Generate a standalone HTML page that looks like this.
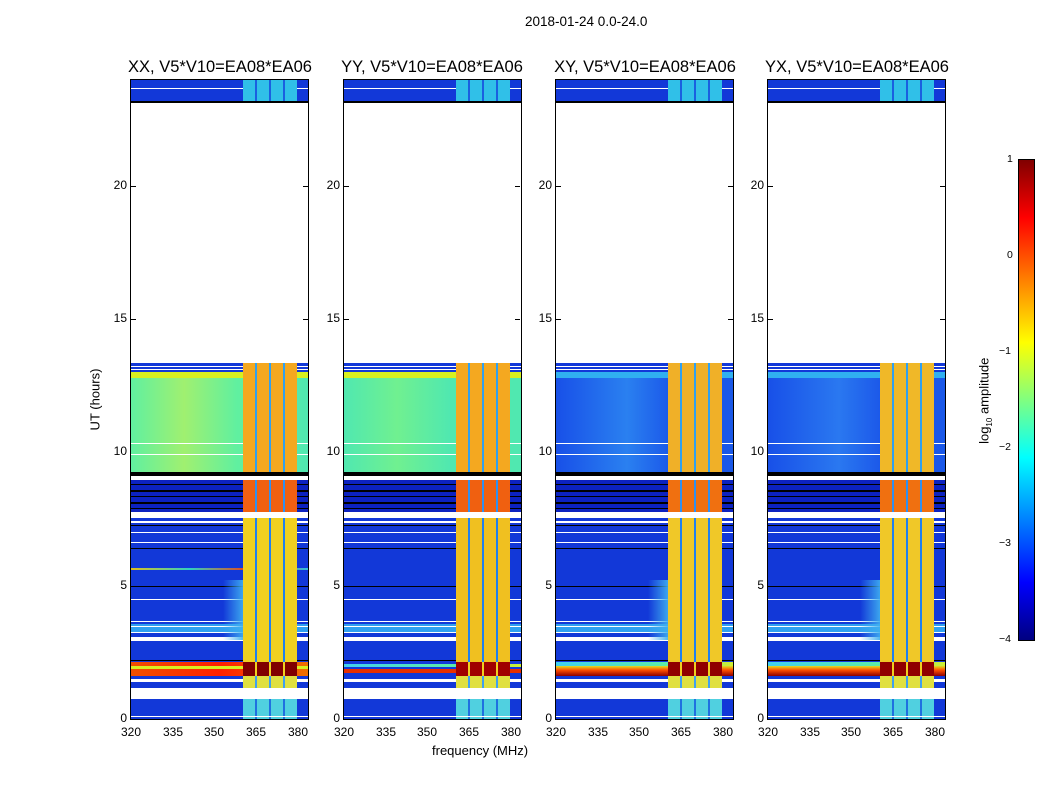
<!DOCTYPE html>
<html><head><meta charset="utf-8"><style>
body{margin:0;width:1050px;height:800px;background:#fff;position:relative;font-family:"Liberation Sans",sans-serif;overflow:hidden}
.t{position:absolute;color:#000;white-space:nowrap}
.p{position:absolute;top:80px;width:177px;height:639px;background:#fff;overflow:hidden;outline:1px solid #000}
.p div{position:absolute;left:0;width:100%}
.b{background:#1238d8}
.bd{background:#0c22c0}
.w{background:#fff}
.k{background:#000}
.col{left:112px!important;width:54px!important}
.haze{left:92px!important;width:22px!important;background:linear-gradient(90deg,rgba(40,120,240,0),#40b0f0)}
.tk{position:absolute;background:#000}
.pt{position:absolute;top:58px;font-size:16.5px;width:220px;text-align:center}
.yl{position:absolute;font-size:12px;text-align:right;width:30px}
.xl{position:absolute;top:725px;font-size:12px;width:30px;text-align:center}
</style></head><body>
<div class="t" style="left:525px;top:14px;font-size:13.5px">2018-01-24 0.0-24.0</div>
<div class="t" style="left:432px;top:743px;font-size:13px">frequency (MHz)</div>
<div class="t" style="left:64px;top:392px;font-size:13px;transform:rotate(-90deg)">UT (hours)</div>
<div class="t" style="left:942px;top:392px;font-size:13px;transform:rotate(-90deg)">log<sub style="font-size:8px">10</sub> amplitude</div>

<div class="pt" style="left:110px">XX, V5*V10=EA08*EA06</div>
<div class="pt" style="left:322px">YY, V5*V10=EA08*EA06</div>
<div class="pt" style="left:535px">XY, V5*V10=EA08*EA06</div>
<div class="pt" style="left:747px">YX, V5*V10=EA08*EA06</div>

<div class="p" style="left:131px">
<div class="b" style="top:0;height:21px"></div><div class="w" style="top:8px;height:1px"></div>
<div class="col" style="top:0;height:21px;background:repeating-linear-gradient(90deg,#30c0e8 0 12px,#1a60e0 12px 14px)"></div>
<div class="k" style="top:21px;height:2px"></div>
<div class="b" style="top:283px;height:9px"></div><div class="w" style="top:286px;height:1px"></div><div class="w" style="top:289px;height:1px"></div>
<div style="top:292px;height:6px;background:#d8f020"></div>
<div style="top:298px;height:94px;background:linear-gradient(90deg,#60f0a0,#a0f070 30%,#60f0a0 60%,#50e8b0)"></div>
<div class="w" style="top:363px;height:1px"></div><div class="w" style="top:374px;height:1px"></div>
<div class="k" style="top:392px;height:4px"></div>
<div class="bd" style="top:400px;height:32px"></div>
<div class="k" style="top:404px;height:1px"></div><div class="k" style="top:410px;height:2px"></div><div class="k" style="top:416px;height:1px"></div><div class="k" style="top:422px;height:2px"></div><div class="k" style="top:428px;height:1px"></div>
<div class="b" style="top:438px;height:144px"></div>
<div class="w" style="top:441px;height:2px"></div><div class="k" style="top:445px;height:1px"></div><div class="w" style="top:452px;height:1px"></div><div class="w" style="top:462px;height:1px"></div><div class="k" style="top:468px;height:1px"></div>
<div style="top:488px;height:2px;background:linear-gradient(90deg,#e0c020,#30d0c0,#f04010,#30c0e0)"></div>
<div class="k" style="top:506px;height:1px"></div><div class="w" style="top:519px;height:1px"></div>
<div class="w" style="top:541px;height:1px"></div><div style="top:544px;height:8px;background:#30a0f0"></div>
<div class="w" style="top:546px;height:1px"></div><div class="w" style="top:552px;height:1px"></div><div class="w" style="top:557px;height:4px"></div>
<div class="haze" style="top:500px;height:60px"></div>
<div class="k" style="top:580px;height:1px"></div>
<div style="top:582px;height:14px;background:linear-gradient(90deg,#f05000,#ff2000 50%,#f07000)"></div>
<div style="top:586px;height:3px;background:#d8f020"></div>
<div class="b" style="top:596px;height:12px"></div><div class="w" style="top:599px;height:3px"></div>
<div class="w" style="top:608px;height:11px"></div>
<div class="b" style="top:619px;height:20px"></div>
<div class="col" style="top:283px;height:109px;background:repeating-linear-gradient(90deg,#f4a820 0 12px,#30a0f0 12px 14px)"></div>
<div class="col" style="top:400px;height:32px;background:repeating-linear-gradient(90deg,#f06010 0 12px,#3090f0 12px 14px)"></div>
<div class="col" style="top:438px;height:144px;background:repeating-linear-gradient(90deg,#f0d020 0 12px,#2080f0 12px 14px)"></div>
<div class="col" style="top:582px;height:14px;background:repeating-linear-gradient(90deg,#800000 0 12px,#f0d020 12px 14px)"></div>
<div class="col" style="top:596px;height:12px;background:repeating-linear-gradient(90deg,#e0e040 0 12px,#40a0f0 12px 14px)"></div>
<div class="col" style="top:619px;height:20px;background:repeating-linear-gradient(90deg,#50d0e0 0 12px,#2070e0 12px 14px)"></div>
<div class="w" style="top:636px;height:1px"></div>
</div>

<div class="p" style="left:344px">
<div class="b" style="top:0;height:21px"></div><div class="w" style="top:8px;height:1px"></div>
<div class="col" style="top:0;height:21px;background:repeating-linear-gradient(90deg,#30c0e8 0 12px,#1a60e0 12px 14px)"></div>
<div class="k" style="top:21px;height:2px"></div>
<div class="b" style="top:283px;height:9px"></div><div class="w" style="top:286px;height:1px"></div><div class="w" style="top:289px;height:1px"></div>
<div style="top:292px;height:6px;background:#d8f020"></div>
<div style="top:298px;height:94px;background:linear-gradient(90deg,#50e8b0,#70f090 30%,#50e8b0 60%,#50e8b0)"></div>
<div class="w" style="top:363px;height:1px"></div><div class="w" style="top:374px;height:1px"></div>
<div class="k" style="top:392px;height:4px"></div>
<div class="bd" style="top:400px;height:32px"></div>
<div class="k" style="top:404px;height:1px"></div><div class="k" style="top:410px;height:2px"></div><div class="k" style="top:416px;height:1px"></div><div class="k" style="top:422px;height:2px"></div><div class="k" style="top:428px;height:1px"></div>
<div class="b" style="top:438px;height:144px"></div>
<div class="w" style="top:441px;height:2px"></div><div class="k" style="top:445px;height:1px"></div><div class="w" style="top:452px;height:1px"></div><div class="w" style="top:462px;height:1px"></div><div class="k" style="top:468px;height:1px"></div>
<div class="k" style="top:506px;height:1px"></div><div class="w" style="top:519px;height:1px"></div>
<div class="w" style="top:541px;height:1px"></div><div style="top:544px;height:8px;background:#30a0f0"></div>
<div class="w" style="top:546px;height:1px"></div><div class="w" style="top:552px;height:1px"></div><div class="w" style="top:557px;height:4px"></div>
<div class="k" style="top:580px;height:1px"></div>
<div class="b" style="top:582px;height:14px"></div>
<div style="top:584px;height:3px;background:linear-gradient(90deg,#40d0f0,#60f0a0 70%,#d0f030)"></div>
<div style="top:589px;height:4px;background:#e83000"></div>
<div class="b" style="top:596px;height:12px"></div><div class="w" style="top:599px;height:3px"></div>
<div class="w" style="top:608px;height:11px"></div>
<div class="b" style="top:619px;height:20px"></div>
<div class="col" style="top:283px;height:109px;background:repeating-linear-gradient(90deg,#f4a820 0 12px,#30a0f0 12px 14px)"></div>
<div class="col" style="top:400px;height:32px;background:repeating-linear-gradient(90deg,#f06010 0 12px,#3090f0 12px 14px)"></div>
<div class="col" style="top:438px;height:144px;background:repeating-linear-gradient(90deg,#f0c020 0 12px,#2080f0 12px 14px)"></div>
<div class="col" style="top:582px;height:14px;background:repeating-linear-gradient(90deg,#a00000 0 12px,#f0d020 12px 14px)"></div>
<div class="col" style="top:596px;height:12px;background:repeating-linear-gradient(90deg,#e0e040 0 12px,#40a0f0 12px 14px)"></div>
<div class="col" style="top:619px;height:20px;background:repeating-linear-gradient(90deg,#50d0e0 0 12px,#2070e0 12px 14px)"></div>
<div class="w" style="top:636px;height:1px"></div>
</div>

<div class="p" style="left:556px">
<div class="b" style="top:0;height:21px"></div><div class="w" style="top:8px;height:1px"></div>
<div class="col" style="top:0;height:21px;background:repeating-linear-gradient(90deg,#30c0e8 0 12px,#1a60e0 12px 14px)"></div>
<div class="k" style="top:21px;height:2px"></div>
<div class="b" style="top:283px;height:9px"></div><div class="w" style="top:286px;height:1px"></div><div class="w" style="top:289px;height:1px"></div>
<div style="top:292px;height:6px;background:#30b0f0"></div>
<div style="top:298px;height:94px;background:linear-gradient(90deg,#1850e8,#2a80f0 40%,#1850e8 70%,#1a58e8)"></div>
<div class="w" style="top:363px;height:1px"></div><div class="w" style="top:374px;height:1px"></div>
<div class="k" style="top:392px;height:4px"></div>
<div class="bd" style="top:400px;height:32px"></div>
<div class="k" style="top:404px;height:1px"></div><div class="k" style="top:410px;height:2px"></div><div class="k" style="top:416px;height:1px"></div><div class="k" style="top:422px;height:2px"></div><div class="k" style="top:428px;height:1px"></div>
<div class="b" style="top:438px;height:144px"></div>
<div class="w" style="top:441px;height:2px"></div><div class="k" style="top:445px;height:1px"></div><div class="w" style="top:452px;height:1px"></div><div class="w" style="top:462px;height:1px"></div><div class="k" style="top:468px;height:1px"></div>
<div class="k" style="top:506px;height:1px"></div><div class="w" style="top:519px;height:1px"></div>
<div class="w" style="top:541px;height:1px"></div><div style="top:544px;height:8px;background:#30a0f0"></div>
<div class="w" style="top:546px;height:1px"></div><div class="w" style="top:552px;height:1px"></div><div class="w" style="top:557px;height:4px"></div>
<div class="haze" style="top:500px;height:60px"></div>
<div class="k" style="top:580px;height:1px"></div>
<div style="top:582px;height:4px;background:linear-gradient(90deg,#40d0f0,#60f0a0 70%,#d0f030)"></div>
<div style="top:586px;height:10px;background:linear-gradient(180deg,#e0e020,#ff5000 40%,#900000)"></div>
<div class="b" style="top:596px;height:12px"></div><div class="w" style="top:599px;height:3px"></div>
<div class="w" style="top:608px;height:11px"></div>
<div class="b" style="top:619px;height:20px"></div>
<div class="col" style="top:283px;height:109px;background:repeating-linear-gradient(90deg,#f0b028 0 12px,#30a0f0 12px 14px)"></div>
<div class="col" style="top:400px;height:32px;background:repeating-linear-gradient(90deg,#f07010 0 12px,#3090f0 12px 14px)"></div>
<div class="col" style="top:438px;height:144px;background:repeating-linear-gradient(90deg,#f0c828 0 12px,#2080f0 12px 14px)"></div>
<div class="col" style="top:582px;height:14px;background:repeating-linear-gradient(90deg,#900000 0 12px,#f0d020 12px 14px)"></div>
<div class="col" style="top:596px;height:12px;background:repeating-linear-gradient(90deg,#e0e040 0 12px,#40a0f0 12px 14px)"></div>
<div class="col" style="top:619px;height:20px;background:repeating-linear-gradient(90deg,#50d0e0 0 12px,#2070e0 12px 14px)"></div>
<div class="w" style="top:636px;height:1px"></div>
</div>

<div class="p" style="left:768px">
<div class="b" style="top:0;height:21px"></div><div class="w" style="top:8px;height:1px"></div>
<div class="col" style="top:0;height:21px;background:repeating-linear-gradient(90deg,#30c0e8 0 12px,#1a60e0 12px 14px)"></div>
<div class="k" style="top:21px;height:2px"></div>
<div class="b" style="top:283px;height:9px"></div><div class="w" style="top:286px;height:1px"></div><div class="w" style="top:289px;height:1px"></div>
<div style="top:292px;height:6px;background:#30b0f0"></div>
<div style="top:298px;height:94px;background:linear-gradient(90deg,#1850e8,#2a78f0 40%,#1850e8 70%,#1a58e8)"></div>
<div class="w" style="top:363px;height:1px"></div><div class="w" style="top:374px;height:1px"></div>
<div class="k" style="top:392px;height:4px"></div>
<div class="bd" style="top:400px;height:32px"></div>
<div class="k" style="top:404px;height:1px"></div><div class="k" style="top:410px;height:2px"></div><div class="k" style="top:416px;height:1px"></div><div class="k" style="top:422px;height:2px"></div><div class="k" style="top:428px;height:1px"></div>
<div class="b" style="top:438px;height:144px"></div>
<div class="w" style="top:441px;height:2px"></div><div class="k" style="top:445px;height:1px"></div><div class="w" style="top:452px;height:1px"></div><div class="w" style="top:462px;height:1px"></div><div class="k" style="top:468px;height:1px"></div>
<div class="k" style="top:506px;height:1px"></div><div class="w" style="top:519px;height:1px"></div>
<div class="w" style="top:541px;height:1px"></div><div style="top:544px;height:8px;background:#30a0f0"></div>
<div class="w" style="top:546px;height:1px"></div><div class="w" style="top:552px;height:1px"></div><div class="w" style="top:557px;height:4px"></div>
<div class="haze" style="top:500px;height:60px"></div>
<div class="k" style="top:580px;height:1px"></div>
<div style="top:582px;height:4px;background:linear-gradient(90deg,#40d0f0,#60f0a0 70%,#d0f030)"></div>
<div style="top:586px;height:10px;background:linear-gradient(180deg,#e0e020,#ff5000 40%,#900000)"></div>
<div class="b" style="top:596px;height:12px"></div><div class="w" style="top:599px;height:3px"></div>
<div class="w" style="top:608px;height:11px"></div>
<div class="b" style="top:619px;height:20px"></div>
<div class="col" style="top:283px;height:109px;background:repeating-linear-gradient(90deg,#f0b828 0 12px,#30a0f0 12px 14px)"></div>
<div class="col" style="top:400px;height:32px;background:repeating-linear-gradient(90deg,#f07010 0 12px,#3090f0 12px 14px)"></div>
<div class="col" style="top:438px;height:144px;background:repeating-linear-gradient(90deg,#f0c828 0 12px,#2080f0 12px 14px)"></div>
<div class="col" style="top:582px;height:14px;background:repeating-linear-gradient(90deg,#900000 0 12px,#f0d020 12px 14px)"></div>
<div class="col" style="top:596px;height:12px;background:repeating-linear-gradient(90deg,#e0e040 0 12px,#40a0f0 12px 14px)"></div>
<div class="col" style="top:619px;height:20px;background:repeating-linear-gradient(90deg,#50d0e0 0 12px,#2070e0 12px 14px)"></div>
<div class="w" style="top:636px;height:1px"></div>
</div>

<div class="yl" style="left:97px;top:711px">0</div><div class="yl" style="left:97px;top:578px">5</div><div class="yl" style="left:97px;top:444px">10</div><div class="yl" style="left:97px;top:311px">15</div><div class="yl" style="left:97px;top:178px">20</div>
<div class="yl" style="left:310px;top:711px">0</div><div class="yl" style="left:310px;top:578px">5</div><div class="yl" style="left:310px;top:444px">10</div><div class="yl" style="left:310px;top:311px">15</div><div class="yl" style="left:310px;top:178px">20</div>
<div class="yl" style="left:522px;top:711px">0</div><div class="yl" style="left:522px;top:578px">5</div><div class="yl" style="left:522px;top:444px">10</div><div class="yl" style="left:522px;top:311px">15</div><div class="yl" style="left:522px;top:178px">20</div>
<div class="yl" style="left:734px;top:711px">0</div><div class="yl" style="left:734px;top:578px">5</div><div class="yl" style="left:734px;top:444px">10</div><div class="yl" style="left:734px;top:311px">15</div><div class="yl" style="left:734px;top:178px">20</div>
<div class="tk" style="left:131px;top:186px;width:5px;height:1px"></div><div class="tk" style="left:131px;top:319px;width:5px;height:1px"></div>
<div class="tk" style="left:303px;top:186px;width:5px;height:1px"></div><div class="tk" style="left:303px;top:319px;width:5px;height:1px"></div>
<div class="tk" style="left:344px;top:186px;width:5px;height:1px"></div><div class="tk" style="left:344px;top:319px;width:5px;height:1px"></div>
<div class="tk" style="left:515px;top:186px;width:5px;height:1px"></div><div class="tk" style="left:515px;top:319px;width:5px;height:1px"></div>
<div class="tk" style="left:556px;top:186px;width:5px;height:1px"></div><div class="tk" style="left:556px;top:319px;width:5px;height:1px"></div>
<div class="tk" style="left:728px;top:186px;width:5px;height:1px"></div><div class="tk" style="left:728px;top:319px;width:5px;height:1px"></div>
<div class="tk" style="left:768px;top:186px;width:5px;height:1px"></div><div class="tk" style="left:768px;top:319px;width:5px;height:1px"></div>
<div class="tk" style="left:940px;top:186px;width:5px;height:1px"></div><div class="tk" style="left:940px;top:319px;width:5px;height:1px"></div>
<div class="xl" style="left:116px">320</div><div class="xl" style="left:158px">335</div><div class="xl" style="left:199px">350</div><div class="xl" style="left:241px">365</div><div class="xl" style="left:283px">380</div>
<div class="xl" style="left:329px">320</div><div class="xl" style="left:371px">335</div><div class="xl" style="left:412px">350</div><div class="xl" style="left:454px">365</div><div class="xl" style="left:496px">380</div>
<div class="xl" style="left:541px">320</div><div class="xl" style="left:583px">335</div><div class="xl" style="left:624px">350</div><div class="xl" style="left:666px">365</div><div class="xl" style="left:708px">380</div>
<div class="xl" style="left:753px">320</div><div class="xl" style="left:795px">335</div><div class="xl" style="left:836px">350</div><div class="xl" style="left:878px">365</div><div class="xl" style="left:920px">380</div>

<div style="position:absolute;left:1019px;top:160px;width:15px;height:480px;outline:1px solid #000;background:linear-gradient(180deg,#800000 0%,#ff0000 12%,#ff8000 25%,#ffff00 38%,#80ff80 50%,#00ffff 62%,#0080ff 75%,#0000ff 88%,#000080 100%)"></div>
<div class="t" style="left:1007px;top:153px;font-size:10.5px">1</div>
<div class="t" style="left:1007px;top:249px;font-size:10.5px">0</div>
<div class="t" style="left:999px;top:345px;font-size:10.5px">−1</div>
<div class="t" style="left:999px;top:441px;font-size:10.5px">−2</div>
<div class="t" style="left:999px;top:537px;font-size:10.5px">−3</div>
<div class="t" style="left:999px;top:633px;font-size:10.5px">−4</div>
</body></html>
